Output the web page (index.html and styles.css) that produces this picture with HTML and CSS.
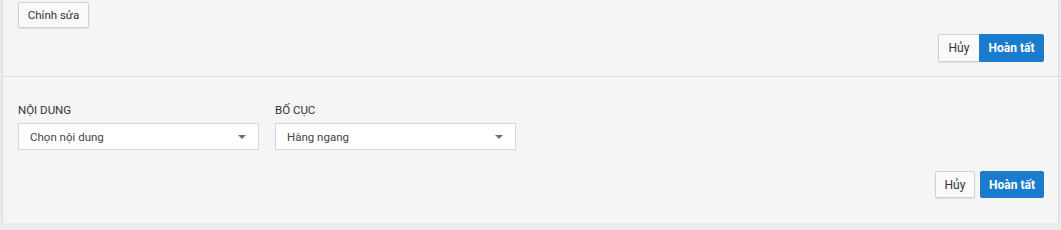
FILE: index.html
```html
<!DOCTYPE html>
<html lang="vi">
  <head>
    <meta charset="UTF-8" />
    <title>Chỉnh sửa</title>
    <link rel="stylesheet" href="styles.css">
  </head>
  <body>
    <div class="panel">
      <div class="section section-top">
        <button class="btn btn-default btn-edit">Chỉnh sửa</button>
        <div class="actions actions-joined">
          <button class="btn btn-default">Hủy</button>
          <button class="btn btn-primary">Hoàn tất</button>
        </div>
      </div>

      <div class="section section-bottom">
        <div class="fields">
          <div class="field">
            <label>NỘI DUNG</label>
            <div class="select">
              <span>Chọn nội dung</span>
              <span class="caret"></span>
            </div>
          </div>
          <div class="field">
            <label>BỐ CỤC</label>
            <div class="select">
              <span>Hàng ngang</span>
              <span class="caret"></span>
            </div>
          </div>
        </div>
        <div class="actions actions-spaced">
          <button class="btn btn-default">Hủy</button>
          <button class="btn btn-primary">Hoàn tất</button>
        </div>
      </div>
    </div>
  </body>
</html>
```

FILE: styles.css
```css
body {
  margin: 0;
  background: #ebebeb;
  font-family: Roboto, "Noto Sans", sans-serif;
  font-size: 12px;
  color: #333;
}

.panel {
  margin: 0 3px;
  background: #f5f5f5;
  box-shadow: 0 1px 2px rgba(0, 0, 0, 0.18);
}

.section {
  padding: 0 14px 0 15px;
}

.section-top {
  padding-top: 2px;
  padding-bottom: 14px;
  border-bottom: 1px solid #dedede;
}

.section-bottom {
  padding-top: 25px;
  padding-bottom: 25px;
}

.btn {
  font-family: inherit;
  font-size: 12px;
  height: 27px;
  padding: 0 10px;
  border-radius: 2px;
  cursor: pointer;
}

.btn-default {
  background: #fafafa;
  color: #333;
  border: 1px solid #d0d0d0;
  box-shadow: 0 1px 1px rgba(0, 0, 0, 0.08);
}

.btn-edit {
  height: 26px;
  width: 71px;
  padding: 0;
  font-size: 11.5px;
}

.btn-primary {
  background: #1b7bcc;
  color: #fff;
  border: 1px solid #1b7bcc;
  font-weight: bold;
  padding: 0 12px;
}

.actions {
  display: flex;
  justify-content: flex-end;
}

.actions-joined {
  margin-top: 6px;
}

.actions-joined .btn {
  height: 28px;
}

.actions-joined .btn-default {
  border-right: none;
  border-radius: 2px 0 0 2px;
  width: 41px;
  padding: 0;
}

.actions-joined .btn-primary {
  border-radius: 0 2px 2px 0;
  width: 65px;
  padding: 0;
}

.actions-spaced {
  margin-top: 21px;
  gap: 5px;
}

.actions-spaced .btn-default {
  width: 40px;
  padding: 0;
}

.actions-spaced .btn-primary {
  width: 64px;
  padding: 0;
}

.fields {
  display: flex;
  gap: 16px;
}

.field label {
  display: block;
  font-size: 11.5px;
  line-height: 16px;
  margin-bottom: 5px;
  color: #333;
}

.select {
  width: 241px;
  height: 27px;
  box-sizing: border-box;
  background: #fff;
  border: 1px solid #d6d6d6;
  display: flex;
  align-items: center;
  justify-content: space-between;
  padding: 0 12px 0 11px;
  font-size: 11.5px;
  color: #444;
}

.caret {
  width: 0;
  height: 0;
  border-left: 4px solid transparent;
  border-right: 4px solid transparent;
  border-top: 4px solid #707070;
}
```
